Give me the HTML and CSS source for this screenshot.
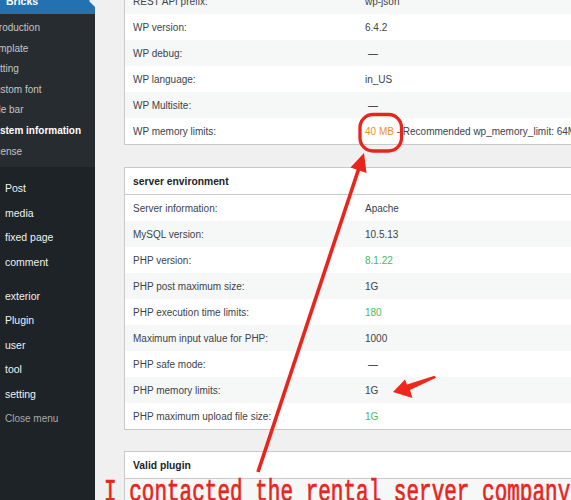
FILE: index.html
```html
<!DOCTYPE html>
<html lang="en">
<head>
<meta charset="utf-8">
<title>System information</title>
<link rel="stylesheet" href="styles.css">
</head>
<body>
<div class="page">
  <nav class="sidebar">
    <div class="menu-current">Bricks</div>
    <ul class="submenu">
      <li>Introduction</li>
      <li>Template</li>
      <li>Setting</li>
      <li>Custom font</li>
      <li>Title bar</li>
      <li class="active">System information</li>
      <li>License</li>
    </ul>
    <ul class="mainmenu">
      <li>Post</li>
      <li>media</li>
      <li>fixed page</li>
      <li>comment</li>
      <li class="sep"></li>
      <li>exterior</li>
      <li>Plugin</li>
      <li>user</li>
      <li>tool</li>
      <li>setting</li>
      <li class="collapse">Close menu</li>
    </ul>
  </nav>
  <main class="content">
    <section class="card card-first">
      <div class="row alt"><span>REST API prefix:</span><span>wp-json</span></div>
      <div class="row"><span>WP version:</span><span>6.4.2</span></div>
      <div class="row alt"><span>WP debug:</span><span class="dash">—</span></div>
      <div class="row"><span>WP language:</span><span>in_US</span></div>
      <div class="row alt"><span>WP Multisite:</span><span class="dash">—</span></div>
      <div class="row"><span>WP memory limits:</span><span><span class="warn">40 MB</span> - Recommended wp_memory_limit: 64M</span></div>
    </section>
    <section class="card">
      <div class="card-head">server environment</div>
      <div class="row"><span>Server information:</span><span>Apache</span></div>
      <div class="row alt"><span>MySQL version:</span><span>10.5.13</span></div>
      <div class="row"><span>PHP version:</span><span class="ok">8.1.22</span></div>
      <div class="row alt"><span>PHP post maximum size:</span><span>1G</span></div>
      <div class="row"><span>PHP execution time limits:</span><span class="ok">180</span></div>
      <div class="row alt"><span>Maximum input value for PHP:</span><span>1000</span></div>
      <div class="row"><span>PHP safe mode:</span><span class="dash">—</span></div>
      <div class="row alt"><span>PHP memory limits:</span><span>1G</span></div>
      <div class="row"><span>PHP maximum upload file size:</span><span class="ok">1G</span></div>
    </section>
    <section class="card card-last">
      <div class="card-head">Valid plugin</div>
      <div class="row alt"><span></span><span></span></div>
    </section>
  </main>
</div>
<svg class="annot" width="571" height="500" viewBox="0 0 571 500" aria-hidden="true">
  <rect x="360" y="114.5" width="41.5" height="36.5" rx="13" fill="none" stroke="#e8251b" stroke-width="3.3"/>
  <line x1="258" y1="472" x2="359" y2="168" stroke="#e8251b" stroke-width="3.6"/>
  <polygon points="364,153 366.5,173 350.5,167.5" fill="#e8251b"/>
  <polygon points="393,392 405,379.5 407,384.5 434.5,375.8 436,377.8 410,390 412.5,398" fill="#f0281c"/>
</svg>
<div class="note">I contacted the rental server company</div>
</body>
</html>
```

FILE: styles.css
```css
* { box-sizing: border-box; }

html, body {
  margin: 0;
  width: 571px;
  height: 500px;
  overflow: hidden;
}

body {
  position: relative;
  font-family: "Liberation Sans", Arial, sans-serif;
  background: #f0f0f1;
}

.page {
  display: flex;
  height: 500px;
}

/* ---------- sidebar ---------- */
.sidebar {
  width: 95px;
  flex: none;
  background: #1d2327;
  overflow: hidden;
  display: flex;
  flex-direction: column;
}

.menu-current {
  position: relative;
  flex: none;
  height: 27px;
  margin-top: -13px;
  padding-left: 6px;
  display: flex;
  align-items: center;
  background: #2271b1;
  color: #fff;
  font-size: 10.5px;
  font-weight: 700;
}

.menu-current::after {
  content: "";
  position: absolute;
  right: 0;
  top: 50%;
  margin-top: -6px;
  border: 6px solid transparent;
  border-right-color: #f0f0f1;
}

.submenu {
  list-style: none;
  margin: 0;
  padding: 4px 0 5px;
  background: #272c31;
}

.submenu li {
  height: 20.6px;
  line-height: 20.6px;
  margin-left: -12.3px;
  font-size: 10px;
  color: #c3c4c7;
  white-space: nowrap;
}

.submenu li.active {
  color: #fff;
  font-weight: 700;
}

.mainmenu {
  list-style: none;
  margin: 9px 0 0;
  padding: 0;
}

.mainmenu li {
  height: 24.6px;
  line-height: 24.6px;
  padding-left: 5px;
  font-size: 10.5px;
  color: #f0f0f1;
  white-space: nowrap;
}

.mainmenu li.sep { height: 9px; }

.mainmenu li.collapse {
  font-size: 10px;
  color: #a7aaad;
}

/* ---------- content ---------- */
.content {
  flex: 1;
  min-width: 0;
  overflow: hidden;
  padding-left: 29px;
}

.card {
  width: 480px;
  background: #fff;
  border: 1px solid #c8c9cc;
  margin-top: 22px;
}

.card-first { margin-top: -13px; }
.card-last { margin-top: 21px; }

.card-head {
  height: 27px;
  padding-left: 8px;
  display: flex;
  align-items: center;
  border-bottom: 1px solid #c8c9cc;
  font-size: 10.3px;
  font-weight: 700;
  color: #1d2327;
}

.row {
  display: grid;
  grid-template-columns: 240px 1fr;
  align-items: center;
  height: 26px;
  font-size: 10px;
  color: #3c434a;
  white-space: nowrap;
}

.row > span:first-child { padding-left: 8px; }

.row.alt { background: #f6f7f7; }

.ok { color: #4ab866; }
.warn { color: #f0901e; }
.dash { padding-left: 3px; color: #1d2327; }

/* ---------- annotations ---------- */
.annot {
  position: absolute;
  left: 0;
  top: 0;
  pointer-events: none;
}

.note {
  position: absolute;
  left: 104px;
  top: 478px;
  font-family: "Liberation Mono", "DejaVu Sans Mono", monospace;
  font-size: 21px;
  line-height: 1;
  color: #e8251b;
  -webkit-text-stroke: 0.5px #e8251b;
  white-space: nowrap;
  transform: scaleY(1.45);
  transform-origin: left top;
}
```
